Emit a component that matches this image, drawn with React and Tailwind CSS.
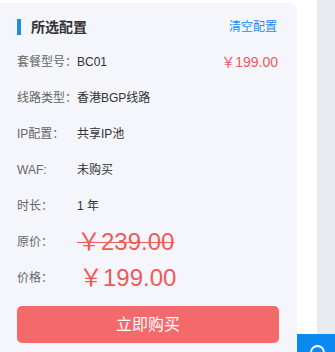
const FONT = { fontFamily: '"Liberation Sans", "Noto Sans CJK SC", sans-serif' }

const rows = [
  { label: "套餐型号：", value: "BC01" },
  { label: "线路类型：", value: "香港BGP线路" },
  { label: "IP配置：", value: "共享IP池" },
  { label: "WAF:", value: "未购买" },
  { label: "时长：", value: "1 年" },
]

function Row({ label, children, right }) {
  return (
    <div className="flex h-[36px] items-center">
      <span className="w-[60px] shrink-0 text-[12px] text-[#666]">{label}</span>
      <div className="flex-1 text-[12px] text-[#333]">{children}</div>
      {right}
    </div>
  )
}

export default function App() {
  return (
    <div className="relative flex h-[352px] w-[335px] overflow-hidden bg-white" style={FONT}>
      <div className="mt-[3px] w-[297px] shrink-0 rounded-tr-lg bg-[#f4f6fb] pl-[17px] pr-[19px] pt-[7px]">
        <div className="flex h-[34px] items-center">
          <span className="h-[16px] w-[4px] bg-[#1a8cf0]" />
          <span className="ml-[10px] flex-1 text-[14px] font-bold text-[#333]">所选配置</span>
          <span className="mr-[1px] text-[12px] text-[#1a8cf0]">清空配置</span>
        </div>
        {rows.map((r, i) => (
          <Row
            key={r.label}
            label={r.label}
            right={i === 0 ? <span className="text-[14px] text-[#f05a5a]">￥199.00</span> : null}
          >
            {r.value}
          </Row>
        ))}
        <Row label="原价：">
          <span className="text-[24px] leading-none text-[#f05a5a] line-through decoration-1">￥239.00</span>
        </Row>
        <Row label="价格：">
          <span className="ml-[2px] text-[24px] leading-none text-[#f05a5a]">￥199.00</span>
        </Row>
        <button className="mt-[10px] flex h-[37px] w-[262px] items-center justify-center rounded-[5px] bg-[#f46a6a] text-[16px] text-white">
          立即购买
        </button>
      </div>
      <div className="w-[20px] shrink-0 bg-white" />
      <div className="flex-1 bg-[#e8ebf0]" />
      <div className="absolute left-[297px] top-[334px] flex h-[40px] w-[40px] justify-center bg-[#0a8af0]">
        <span className="mt-[11px] h-[15px] w-[15px] rounded-full border-2 border-white" />
      </div>
    </div>
  )
}
